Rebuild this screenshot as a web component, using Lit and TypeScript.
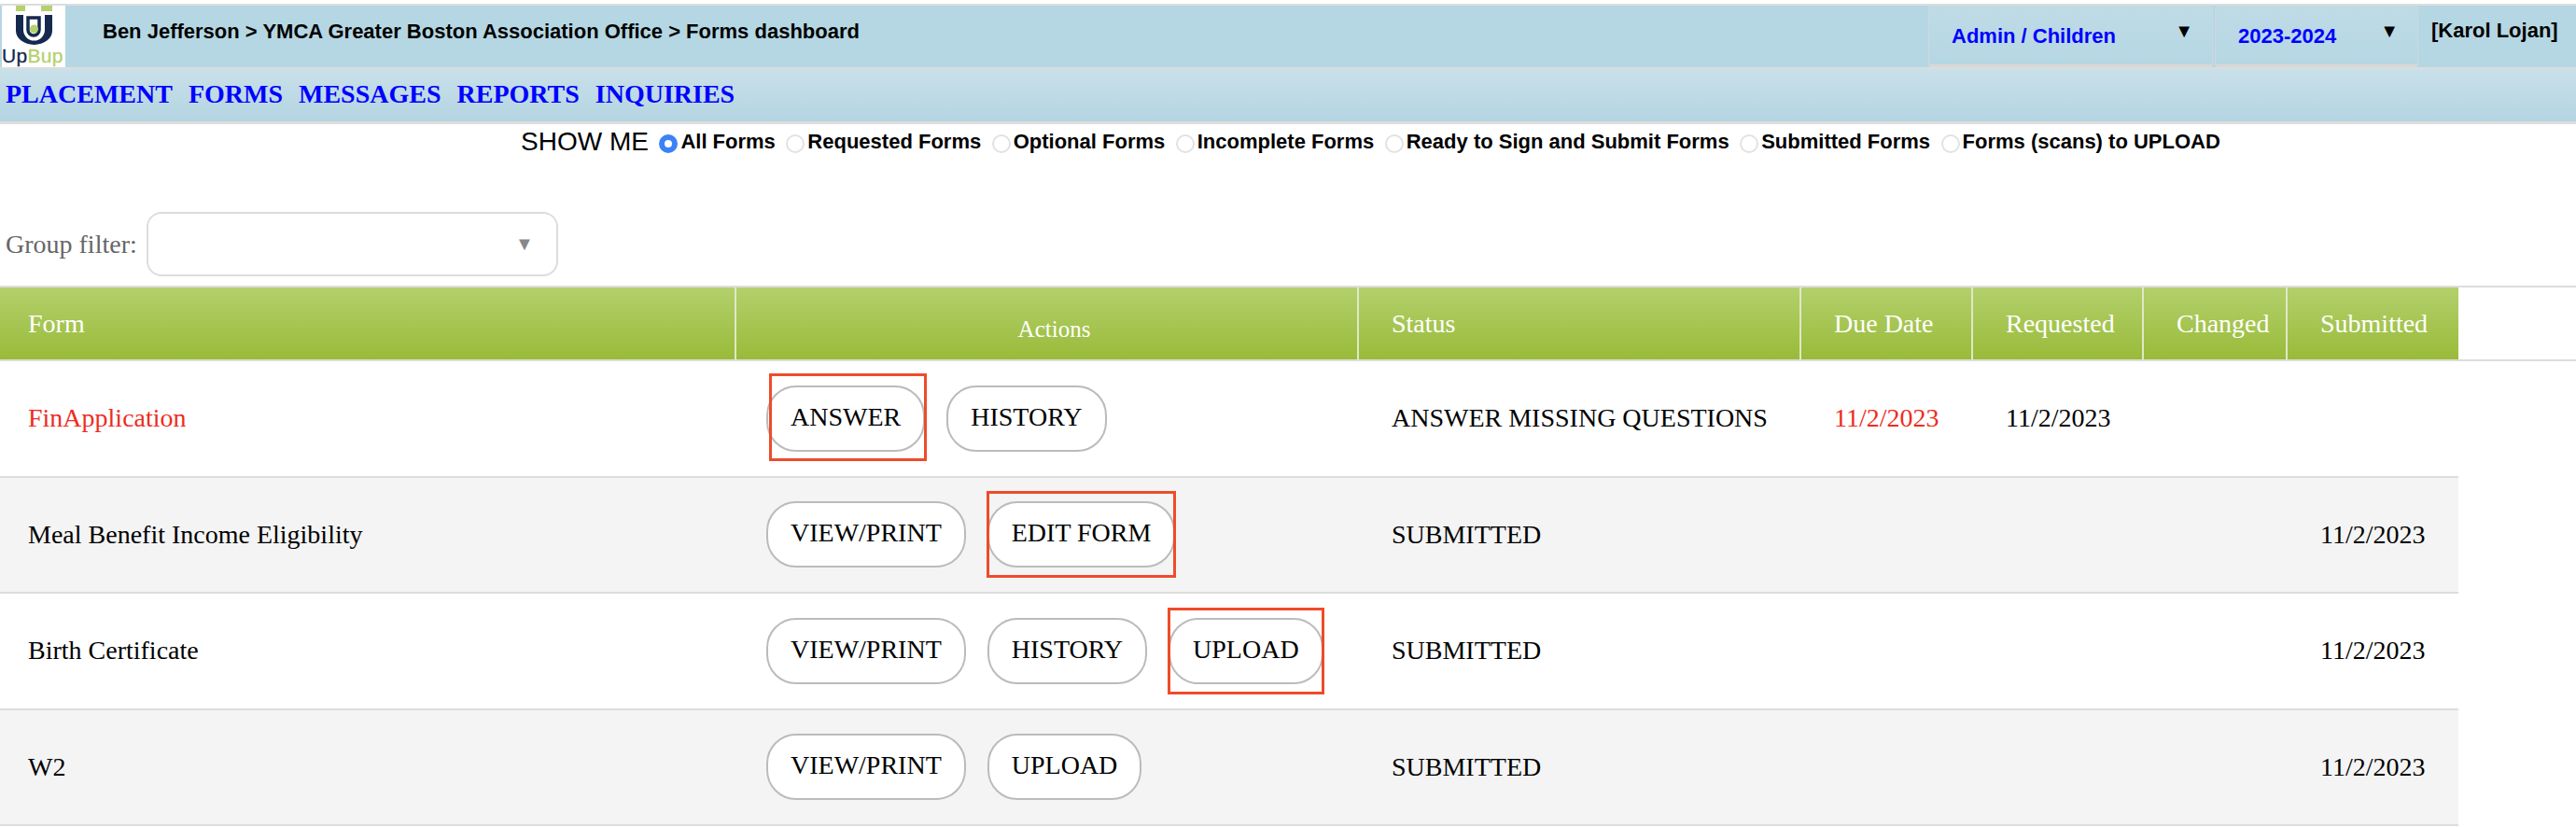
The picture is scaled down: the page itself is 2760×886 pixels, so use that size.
import { LitElement, html, css } from "lit";
import { customElement } from "lit/decorators.js";

type Btn = { label: string; mark?: string };
type Row = { form: string; red?: boolean; btns: Btn[]; status: string; due?: string; requested?: string; submitted?: string };

const ROWS: Row[] = [
  { form: "FinApplication", red: true, btns: [{ label: "ANSWER", mark: "first" }, { label: "HISTORY" }], status: "ANSWER MISSING QUESTIONS", due: "11/2/2023", requested: "11/2/2023" },
  { form: "Meal Benefit Income Eligibility", btns: [{ label: "VIEW/PRINT" }, { label: "EDIT FORM", mark: "next" }], status: "SUBMITTED", submitted: "11/2/2023" },
  { form: "Birth Certificate", btns: [{ label: "VIEW/PRINT" }, { label: "HISTORY" }, { label: "UPLOAD", mark: "next" }], status: "SUBMITTED", submitted: "11/2/2023" },
  { form: "W2", btns: [{ label: "VIEW/PRINT" }, { label: "UPLOAD" }], status: "SUBMITTED", submitted: "11/2/2023" },
];
const FILTERS = ["All Forms", "Requested Forms", "Optional Forms", "Incomplete Forms", "Ready to Sign and Submit Forms", "Submitted Forms", "Forms (scans) to UPLOAD"];

@customElement("app-root")
export class AppRoot extends LitElement {
  static styles = css`
    :host { display: block; width: 2760px; height: 886px; overflow: hidden; background: #fff; font-family: "Liberation Serif", serif; color: #000; }
    .top { margin-top: 4px; border-top: 2px solid #ddd; height: 66px; background: #b5d7e3; display: flex; }
    .logo { width: 68px; height: 66px; background: #fff; flex: none; margin-left: 2px; }
    .logo svg { display: block; }
    .crumb { flex: 1; padding: 15px 0 0 40px; font: bold 22px "Liberation Sans", sans-serif; }
    .sel { height: 66px; box-sizing: border-box; border: 1px solid #ccd9df; border-bottom: 3px solid #d8d8d8; border-top: 0; border-radius: 4px; background: linear-gradient(#bfdbe6, #b5d7e3); display: flex; justify-content: space-between; padding: 20px 20px 0 24px; font: bold 22px "Liberation Sans", sans-serif; color: #00f; margin-right: 2px; flex: none; }
    .sel.a { width: 305px; }
    .sel.b { width: 218px; margin-right: 0; }
    .caret { color: #000; font-size: 20px; margin-top: -4px; }
    .user { width: 169px; flex: none; padding: 14px 0 0 14px; box-sizing: border-box; font: bold 22px "Liberation Sans", sans-serif; }
    .nav { border-top: 2px solid #ddd; border-bottom: 3px solid #ddd; height: 61px; box-sizing: border-box; background: linear-gradient(#c9e0ea, #b3d5e1); display: flex; gap: 17px; padding: 11px 0 0 6px; font-weight: bold; font-size: 28px; color: #00f; }
    .show { display: flex; align-items: center; padding: 1px 0 0 558px; height: 36px; font: bold 22px "Liberation Sans", sans-serif; }
    .show .lbl { font-weight: normal; font-size: 28px; }
    .radio { width: 20px; height: 20px; border-radius: 50%; box-sizing: border-box; border: 2px solid #e2e2e2; background: #fff; margin: 4px 3px 0 11.5px; flex: none; }
    .radio.on { border: 6px solid #3b82f6; }
    .filter { display: flex; align-items: center; gap: 10px; padding: 57px 0 0 6px; color: #666; font-size: 28px; }
    .select { width: 441px; height: 69px; box-sizing: border-box; border: 2px solid #ddd; border-radius: 16px; display: flex; align-items: center; justify-content: flex-end; padding-right: 24px; color: #888; font-size: 20px; }
    .grid { display: grid; grid-template-columns: 789px 667px 474px 184px 183px 154px 183px; width: 2634px; }
    .hdr-wrap { margin-top: 10px; border-top: 2px solid #ddd; border-bottom: 2px solid #ddd; height: 77px; }
    .hdr { height: 77px; background: linear-gradient(#b3d06c, #99bb39); color: #fff; font-size: 28px; }
    .hdr > div { border-right: 2px solid #dfe8c8; box-sizing: border-box; padding: 23px 0 0 35px; }
    .hdr > div:first-child { padding-left: 30px; }
    .hdr > div:last-child { border-right: 0; }
    .hdr > .act { text-align: center; font-size: 25px; padding: 31px 0 0 16px; }
    .row { font-size: 28px; align-items: center; border-bottom: 2px solid #ddd; height: 124.5px; box-sizing: border-box; }
    .row.alt { background: #f4f4f4; }
    .row > div { padding-left: 35px; }
    .row > div:first-child { padding-left: 30px; }
    .red { color: #ee2c1e; }
    .row > .btns { display: flex; gap: 23px; padding-left: 32px; }
    .btn { position: relative; height: 71px; box-sizing: border-box; border: 2px solid #bbb; border-radius: 32px; background: #fff; padding: 0 24px 3px; display: flex; align-items: center; }
    .mark { position: absolute; border: 3px solid #ee4b2b; pointer-events: none; }
    .mark.first { inset: -15px -4px -12px 1px; }
    .mark.next { inset: -13px -3px -13px -3px; }
  `;

  render() {
    return html`
      <div class="top">
        <div class="logo">
          <svg width="68" height="66" viewBox="0 0 68 66">
            <rect x="15" y="0" width="10" height="6" fill="#b5d06e"/><rect x="42" y="0" width="12" height="6" fill="#b5d06e"/>
            <path d="M15 10h8v16a11.5 11.5 0 0 0 23 0V10h8v17a19.5 15 0 0 1-39 0z" fill="#15294f"/>
            <path d="M28 13h12v13a6 6 0 0 1-12 0z" fill="none" stroke="#15294f" stroke-width="3.5"/>
            <circle cx="34.500" cy="25" r="4.500" fill="#b5d06e"/>
            <text x="0" y="61" font-family="Liberation Sans" font-size="21" letter-spacing="0.300" stroke-width="0.300" fill="#15294f" stroke="#15294f">Up<tspan fill="#b5d06e" stroke="#b5d06e">Bup</tspan></text>
          </svg>
        </div>
        <div class="crumb">Ben Jefferson &gt; YMCA Greater Boston Association Office &gt; Forms dashboard</div>
        <div class="sel a"><span>Admin / Children</span><span class="caret">▼</span></div>
        <div class="sel b"><span>2023-2024</span><span class="caret">▼</span></div>
        <div class="user">[Karol Lojan]</div>
      </div>
      <div class="nav"><span>PLACEMENT</span><span>FORMS</span><span>MESSAGES</span><span>REPORTS</span><span>INQUIRIES</span></div>
      <div class="show">
        <span class="lbl">SHOW ME</span>
        ${FILTERS.map((f, i) => html`<span class="radio ${i === 0 ? "on" : ""}"></span><span>${f}</span>`)}
      </div>
      <div class="filter"><span>Group filter:</span><div class="select">▼</div></div>
      <div class="hdr-wrap">
        <div class="grid hdr">
          <div>Form</div><div class="act">Actions</div><div>Status</div><div>Due Date</div><div>Requested</div><div>Changed</div><div>Submitted</div>
        </div>
      </div>
      ${ROWS.map((r, i) => html`
        <div class="grid row ${i % 2 ? "alt" : ""}">
          <div class=${r.red ? "red" : ""}>${r.form}</div>
          <div class="btns">${r.btns.map((b) => html`<div class="btn">${b.label}${b.mark ? html`<span class="mark ${b.mark}"></span>` : ""}</div>`)}</div>
          <div>${r.status}</div>
          <div class="red">${r.due ?? ""}</div>
          <div>${r.requested ?? ""}</div>
          <div></div>
          <div>${r.submitted ?? ""}</div>
        </div>`)}
    `;
  }
}
